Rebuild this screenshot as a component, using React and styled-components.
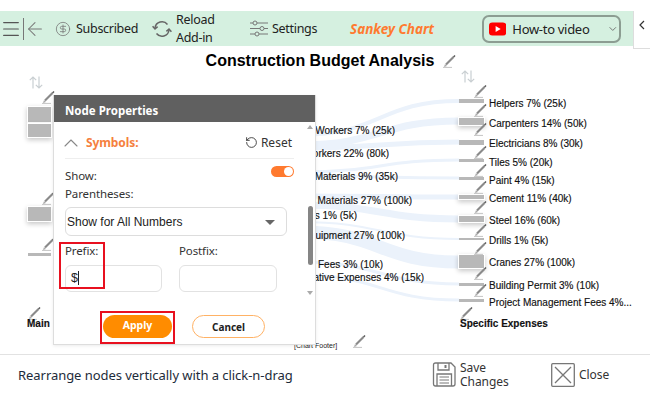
import React from 'react'
import styled, { createGlobalStyle } from 'styled-components'
import { Menu, ArrowLeft, CircleDollarSign, ChevronDown, ChevronUp, RotateCcw } from 'lucide-react'

const GlobalStyle = createGlobalStyle`
  html, body {
    margin: 0;
    background: #fff;
    font-family: "Noto Sans", "Liberation Sans", sans-serif;
  }
  * { box-sizing: border-box; }
`

const Page = styled.div`
  width: 650px;
  height: 405px;
  padding-top: 11px;
  position: relative;
  overflow: hidden;
  background: #fff;
`

const Toolbar = styled.div`
  width: 633px;
  height: 35px;
  background: #d5f0e0;
  display: flex;
  align-items: center;
  color: #333;
  font-size: 12.5px;
  letter-spacing: -0.3px;
`

const ToolItem = styled.div`
  display: flex;
  flex: none;
  align-items: center;
  gap: ${({ $gap }) => $gap || 0}px;
  margin-left: ${({ $ml }) => $ml || 0}px;
  width: ${({ $w }) => ($w ? `${$w}px` : 'auto')};
  color: #222;
  & svg { flex: none; color: #777; }
`

const Divider = styled.div`
  width: 1px;
  height: 22px;
  background: #777;
  margin-left: 1px;
`

const TwoLines = styled.div`
  line-height: 18px;
  width: 40px;
`

const AppName = styled.div`
  flex: none;
  margin-left: 34px;
  width: 85px;
  color: #ff7a2f;
  font-weight: 700;
  font-style: italic;
  font-size: 13.5px;
  white-space: nowrap;
  letter-spacing: 0;
`

const VideoButton = styled.div`
  flex: none;
  margin-left: 47px;
  width: 139px;
  height: 28px;
  border: 2px solid #8c9d92;
  border-radius: 7px;
  display: flex;
  align-items: center;
  padding-left: 5px;
  gap: 6px;
  font-size: 13px;
  letter-spacing: -0.3px;
  white-space: nowrap;
  color: #222;
  & > svg:last-child { margin-left: 12px; color: #666; }
`

const CollapseTab = styled.div`
  position: absolute;
  left: 633px;
  top: 11px;
  width: 17px;
  height: 38px;
  border-left: 1px solid #ddd;
  border-bottom: 1px solid #ddd;
  display: flex;
  align-items: center;
  justify-content: center;
  padding-bottom: 9px;
  color: #333;
`

const Canvas = styled.div`
  position: relative;
  height: 308px;
  width: 650px;
`

const FlowLayer = styled.svg`
  position: absolute;
  left: 0;
  top: -46px;
`

const Title = styled.div`
  position: absolute;
  left: 0;
  top: 6px;
  width: 640px;
  text-align: center;
  font: 700 16px "Liberation Sans", sans-serif;
  color: #000;
`

const Spot = styled.div`
  position: absolute;
  left: ${({ $x }) => $x}px;
  top: ${({ $y }) => $y - 46}px;
  display: flex;
`

const NodeBar = styled.div`
  position: absolute;
  left: ${({ $x }) => $x}px;
  top: ${({ $y }) => $y - 46}px;
  width: ${({ $w }) => $w}px;
  height: ${({ $h }) => $h}px;
  background: #b8b8b8;
  box-shadow: ${({ $lift }) => ($lift ? '0 0 0 1px #fff, 0 2px 5px 1px rgba(0,0,0,.22)' : 'none')};
`

const Label = styled.div`
  position: absolute;
  top: ${({ $y }) => $y - 46 - 6}px;
  ${({ $x }) => ($x !== undefined ? `left: ${$x}px;` : '')}
  ${({ $end }) => ($end !== undefined ? `right: ${650 - $end}px;` : '')}
  font: ${({ $bold }) => ($bold ? 700 : 400)} 10px/12px "Liberation Sans", sans-serif;
  color: #111;
  white-space: nowrap;
  -webkit-text-stroke: 0.15px #111;
`

const ChartFooter = styled.div`
  position: absolute;
  left: 294px;
  top: 295px;
  font: 400 7px/9px "Liberation Sans", sans-serif;
  color: #222;
`

const Modal = styled.div`
  position: absolute;
  left: 53px;
  top: 49px;
  width: 263px;
  height: 250px;
  background: #fff;
  border: 1px solid #ddd;
  border-top: none;
  box-shadow: 0 1px 3px rgba(0,0,0,.08);
  display: flex;
  flex-direction: column;
`

const ModalHeader = styled.div`
  height: 27px;
  flex: none;
  background: #606060;
  color: #fff;
  font-weight: 700;
  font-size: 11.5px;
  line-height: 31px;
  padding-left: 11px;
`

const ModalBody = styled.div`
  position: relative;
  flex: 1;
  padding: 11px 21px 0 11px;
`

const SectionHead = styled.div`
  display: flex;
  align-items: center;
  height: 20px;
  padding-bottom: 1px;
  & > svg { color: #888; margin-left: -6px; flex: none; }
`

const SectionName = styled.div`
  margin-left: 3px;
  color: #f5803e;
  font-weight: 700;
  font-size: 12px;
  letter-spacing: -0.1px;
`

const ResetLink = styled.div`
  margin-left: auto;
  padding-right: 2px;
  display: flex;
  align-items: center;
  gap: 3px;
  font-size: 12px;
  color: #333;
  & svg { color: #222; }
`

const Rule = styled.div`
  height: 1px;
  background: #eee;
  margin-top: 5px;
`

const ShowRow = styled.div`
  display: flex;
  align-items: flex-start;
  justify-content: space-between;
  margin-top: 9px;
  height: 18px;
`

const FieldLabel = styled.div`
  font-size: 11.5px;
  line-height: 16px;
  letter-spacing: -0.12px;
  color: #333;
`

const Toggle = styled.div`
  width: 23px;
  height: 11px;
  margin-top: -2px;
  border-radius: 6px;
  background: #ff7a2f;
  position: relative;
  &:after {
    content: "";
    position: absolute;
    right: 1px;
    top: 1px;
    width: 9px;
    height: 9px;
    border-radius: 50%;
    background: #fff;
  }
`

const SelectBox = styled.div`
  margin-top: 5px;
  width: 222px;
  height: 29px;
  border: 1px solid #ddd;
  border-radius: 6px;
  display: flex;
  align-items: center;
  justify-content: space-between;
  padding: 1px 11px 0 1px;
  font: 400 12px "Liberation Sans", sans-serif;
  color: #222;
  &:after {
    content: "";
    border-left: 5px solid transparent;
    border-right: 5px solid transparent;
    border-top: 5px solid #666;
  }
`

const FieldRow = styled.div`
  display: flex;
  gap: 17px;
  margin-top: 7px;
`

const Field = styled.div`
  position: relative;
  width: ${({ $w }) => $w}px;
`

const TextInput = styled.div`
  margin-top: 6px;
  height: 27px;
  border: 1px solid #e2e2e2;
  border-radius: 6px;
  padding-left: 5px;
  font: 400 12.5px/25px "Liberation Sans", sans-serif;
  color: #222;
  & span { border-right: 1px solid #222; }
`

const RedMark = styled.div`
  position: absolute;
  left: -6px;
  top: -1px;
  width: 46px;
  height: 47px;
  border: 2px solid #e8101f;
`

const ButtonRow = styled.div`
  display: flex;
  align-items: flex-start;
  margin-top: 19px;
  margin-left: 35px;
`

const RedFrame = styled.div`
  border: 2px solid #e8101f;
  padding: 2px 1px 4px;
  display: flex;
`

const ApplyButton = styled.div`
  width: 69px;
  height: 23px;
  border-radius: 12px;
  background: #ff8c00;
  color: #fff;
  font-weight: 700;
  font-size: 10.5px;
  line-height: 21px;
  text-align: center;
`

const CancelButton = styled.div`
  width: 73px;
  height: 23px;
  margin: 4px 0 0 17px;
  border-radius: 12px;
  border: 1px solid #ffb265;
  background: #fff;
  color: #222;
  font-weight: 700;
  font-size: 10px;
  line-height: 22px;
  text-align: center;
`

const ScrollTrack = styled.div`
  position: absolute;
  right: 1px;
  top: 3px;
  width: 7px;
  height: 170px;
  &:before, &:after {
    content: "";
    position: absolute;
    left: 0;
    border-left: 3.5px solid transparent;
    border-right: 3.5px solid transparent;
  }
  &:before { top: 0; border-bottom: 4px solid #aaa; }
  &:after { bottom: 0; border-top: 4px solid #aaa; }
`

const ScrollThumb = styled.div`
  position: absolute;
  left: 1px;
  top: 81px;
  width: 5px;
  height: 59px;
  border-radius: 3px;
  background: #858585;
`

const Footer = styled.div`
  border-top: 1px solid #e2e2e2;
  height: 40px;
  display: flex;
  align-items: center;
  padding-left: 18px;
  font-size: 13px;
  letter-spacing: -0.05px;
  color: #1d2b3a;
`

const FooterHint = styled.div`
  width: 414px;
  white-space: nowrap;
`

const FooterAction = styled.div`
  display: flex;
  align-items: center;
  gap: 4px;
  width: ${({ $w }) => $w}px;
  font-size: 12px;
  line-height: 14px;
  color: #333;
  & svg { flex: none; }
`

const ActionText = styled.div`
  white-space: nowrap;
`

const Pencil = () => (
  <svg width="13" height="13" viewBox="0 0 13 13" fill="none">
    <path d="M3 9.5 L10.5 2" stroke="#8a8a8a" strokeWidth="2.2" />
    <path d="M10.5 2 L12 .6" stroke="#555" strokeWidth="1.4" />
    <path d="M0 12.4 H9" stroke="#c4c4c4" strokeWidth="1" />
    <path d="M1 12 L2 9 L4 11 Z" fill="#aaa" />
  </svg>
)

const UpDown = () => (
  <svg width="14" height="13" viewBox="0 0 14 13" fill="none" stroke="#c9cfd2" strokeWidth="1.2">
    <path d="M4 12.5 V1 M.8 4.2 L4 1 L7.2 4.2" />
    <path d="M10 .5 V12 M6.8 8.8 L10 12 L13.2 8.8" />
  </svg>
)

const ReloadIcon = () => (
  <svg width="20" height="18" viewBox="0 0 20 18" fill="none" stroke="#666" strokeWidth="1.5">
    <path d="M3 8 A7 7 0 0 1 15.5 4.5" />
    <path d="M17 10 A7 7 0 0 1 4.5 13.5" />
    <path d="M.6 6.2 L3 9 L5.6 6.6" />
    <path d="M19.4 11.8 L17 9 L14.4 11.4" />
  </svg>
)

const SlidersIcon = () => (
  <svg width="18" height="17" viewBox="0 0 18 17" fill="none" stroke="#777" strokeWidth="1">
    <path d="M0 3 H3 M7 3 H18 M0 8.5 H10 M14 8.5 H18 M0 14 H5 M9 14 H18" />
    <circle cx="5" cy="3" r="2" />
    <circle cx="12" cy="8.5" r="2" />
    <circle cx="7" cy="14" r="2" />
  </svg>
)

const YoutubeIcon = () => (
  <svg width="21" height="16" viewBox="0 0 21 16">
    <rect width="21" height="16" rx="4" fill="#f00" />
    <path d="M8 4.4 L14.2 8 L8 11.6 Z" fill="#fff" />
  </svg>
)

const SaveIcon = () => (
  <svg width="24" height="25" viewBox="0 0 24 25" fill="none" stroke="#777" strokeWidth="1.3">
    <path d="M1.5 3 Q1.5 1 3.5 1 H19 L23 5 V22 Q23 24 21 24 H3.5 Q1.5 24 1.5 22 Z" />
    <path d="M6 1 V8 H17 V1" />
    <path d="M13.5 3 V6" strokeWidth="2" />
    <path d="M5 24 V12 H19.5 V24" />
    <path d="M7.5 15 H17 M7.5 18 H17 M7.5 21 H17" strokeWidth="1" />
  </svg>
)

const CloseIcon = () => (
  <svg width="24" height="24" viewBox="0 0 24 24" fill="none" stroke="#777" strokeWidth="1.3">
    <rect x=".7" y=".7" width="22.6" height="22.6" rx="1" />
    <path d="M4 4 L20 20 M20 4 L4 20" />
  </svg>
)

const flows = [
  [135, 101, 4],
  [145, 121, 7],
  [148, 142, 5],
  [172, 160, 3],
  [176, 178, 3],
  [196, 197, 5],
  [205, 219, 7],
  [222, 239, 2],
  [232, 262, 13],
  [262, 284, 3],
  [275, 300, 3]
]

const leftBars = [
  { x: 28, y: 107, w: 23, h: 15, lift: true },
  { x: 28, y: 124, w: 23, h: 13, lift: true },
  { x: 28, y: 207, w: 23, h: 14, lift: true },
  { x: 28, y: 253, w: 23, h: 3 }
]

const rightNodes = [
  { name: 'Helpers 7% (25k)', y: 99, h: 4, label: 104, pen: 85 },
  { name: 'Carpenters 14% (50k)', y: 118, h: 7, label: 124, pen: 104, lift: true },
  { name: 'Electricians 8% (30k)', y: 140, h: 5, label: 144, pen: 123 },
  { name: 'Tiles 5% (20k)', y: 159, h: 3, label: 163, pen: 146 },
  { name: 'Paint 4% (15k)', y: 177, h: 3, label: 181, pen: 164 },
  { name: 'Cement 11% (40k)', y: 195, h: 4, label: 199, pen: 181, lift: true },
  { name: 'Steel 16% (60k)', y: 216, h: 6, label: 221, pen: 201, lift: true },
  { name: 'Drills 1% (5k)', y: 238, h: 2, label: 241, pen: 224 },
  { name: 'Cranes 27% (100k)', y: 255, h: 13, label: 263, pen: 242, lift: true },
  { name: 'Building Permit 3% (10k)', y: 283, h: 3, label: 286, pen: 267 },
  { name: 'Project Management Fees 4%...', y: 299, h: 3, label: 303, pen: 284 }
]

const middleLabels = [
  { name: 'Skilled Workers 7% (25k)', y: 131, end: 395 },
  { name: 'Other Workers 22% (80k)', y: 154, end: 389 },
  { name: 'Raw Materials 9% (35k)', y: 177, end: 398 },
  { name: 'Finished Materials 27% (100k)', y: 201, end: 412 },
  { name: 'Tools 1% (5k)', y: 216, end: 357 },
  { name: 'Equipment 27% (100k)', y: 236, end: 405 },
  { name: 'Inspection Fees 3% (10k)', y: 265, end: 383 },
  { name: 'Administrative Expenses 4% (15k)', y: 278, end: 424 }
]

const loosePens = [
  [42, 91],
  [42, 192],
  [42, 238],
  [28, 307],
  [460, 307],
  [353, 335],
  [443, 55]
]

const App = () => {
  return (
    <Page>
      <GlobalStyle />
      <Toolbar>
        <ToolItem><Menu size={22} strokeWidth={1.3} color="#555" /></ToolItem>
        <Divider />
        <ToolItem><ArrowLeft size={22} strokeWidth={1.1} /></ToolItem>
        <ToolItem $ml={9} $w={83} $gap={5}><CircleDollarSign size={16} strokeWidth={1.2} />Subscribed</ToolItem>
        <ToolItem $ml={14} $gap={4}>
          <ReloadIcon />
          <TwoLines>Reload<br />Add-in</TwoLines>
        </ToolItem>
        <ToolItem $ml={34} $w={66} $gap={4}><SlidersIcon />Settings</ToolItem>
        <AppName>Sankey Chart</AppName>
        <VideoButton>
          <YoutubeIcon />
          How-to video
          <ChevronDown size={14} strokeWidth={1.8} />
        </VideoButton>
      </Toolbar>
      <CollapseTab>
        <svg width="6" height="10" viewBox="0 0 6 10" fill="none" stroke="#333" strokeWidth="1.2"><path d="M5 1 L1 5 L5 9" /></svg>
      </CollapseTab>
      <Canvas>
        <FlowLayer width="650" height="354" fill="none" stroke="#ebf2fb">
          {flows.map(([from, to, width]) => (
            <path key={to} d={`M300 ${from} C380 ${from} 380 ${to} 459 ${to}`} strokeWidth={width} />
          ))}
        </FlowLayer>
        <Title>Construction Budget Analysis</Title>
        <Spot $x={29} $y={76}><UpDown /></Spot>
        <Spot $x={461} $y={70}><UpDown /></Spot>
        {leftBars.map(b => (
          <NodeBar key={b.y} $x={b.x} $y={b.y} $w={b.w} $h={b.h} $lift={b.lift} />
        ))}
        {loosePens.map(([x, y]) => (
          <Spot key={`${x}-${y}`} $x={x} $y={y}><Pencil /></Spot>
        ))}
        {rightNodes.map(n => (
          <React.Fragment key={n.name}>
            <NodeBar $x={459} $y={n.y} $w={25} $h={n.h} $lift={n.lift} />
            <Spot $x={474} $y={n.pen}><Pencil /></Spot>
            <Label $x={489} $y={n.label}>{n.name}</Label>
          </React.Fragment>
        ))}
        {middleLabels.map(l => (
          <Label key={l.name} $end={l.end} $y={l.y}>{l.name}</Label>
        ))}
        <Label $x={27} $y={324} $bold>Main</Label>
        <Label $x={460} $y={324} $bold>Specific Expenses</Label>
        <ChartFooter>[Chart Footer]</ChartFooter>
        <Modal>
          <ModalHeader>Node Properties</ModalHeader>
          <ModalBody>
            <SectionHead>
              <ChevronUp size={24} strokeWidth={1.1} />
              <SectionName>Symbols:</SectionName>
              <ResetLink><RotateCcw size={13} strokeWidth={1.5} />Reset</ResetLink>
            </SectionHead>
            <Rule />
            <ShowRow>
              <FieldLabel>Show:</FieldLabel>
              <Toggle />
            </ShowRow>
            <FieldLabel>Parentheses:</FieldLabel>
            <SelectBox>Show for All Numbers</SelectBox>
            <FieldRow>
              <Field $w={97}>
                <FieldLabel>Prefix:</FieldLabel>
                <TextInput><span>$</span></TextInput>
                <RedMark />
              </Field>
              <Field $w={98}>
                <FieldLabel>Postfix:</FieldLabel>
                <TextInput />
              </Field>
            </FieldRow>
            <ButtonRow>
              <RedFrame><ApplyButton>Apply</ApplyButton></RedFrame>
              <CancelButton>Cancel</CancelButton>
            </ButtonRow>
            <ScrollTrack><ScrollThumb /></ScrollTrack>
          </ModalBody>
        </Modal>
      </Canvas>
      <Footer>
        <FooterHint>Rearrange nodes vertically with a click-n-drag</FooterHint>
        <FooterAction $w={119}><SaveIcon /><ActionText>Save<br />Changes</ActionText></FooterAction>
        <FooterAction $w={70}><CloseIcon /><ActionText>Close</ActionText></FooterAction>
      </Footer>
    </Page>
  )
}

export default App
